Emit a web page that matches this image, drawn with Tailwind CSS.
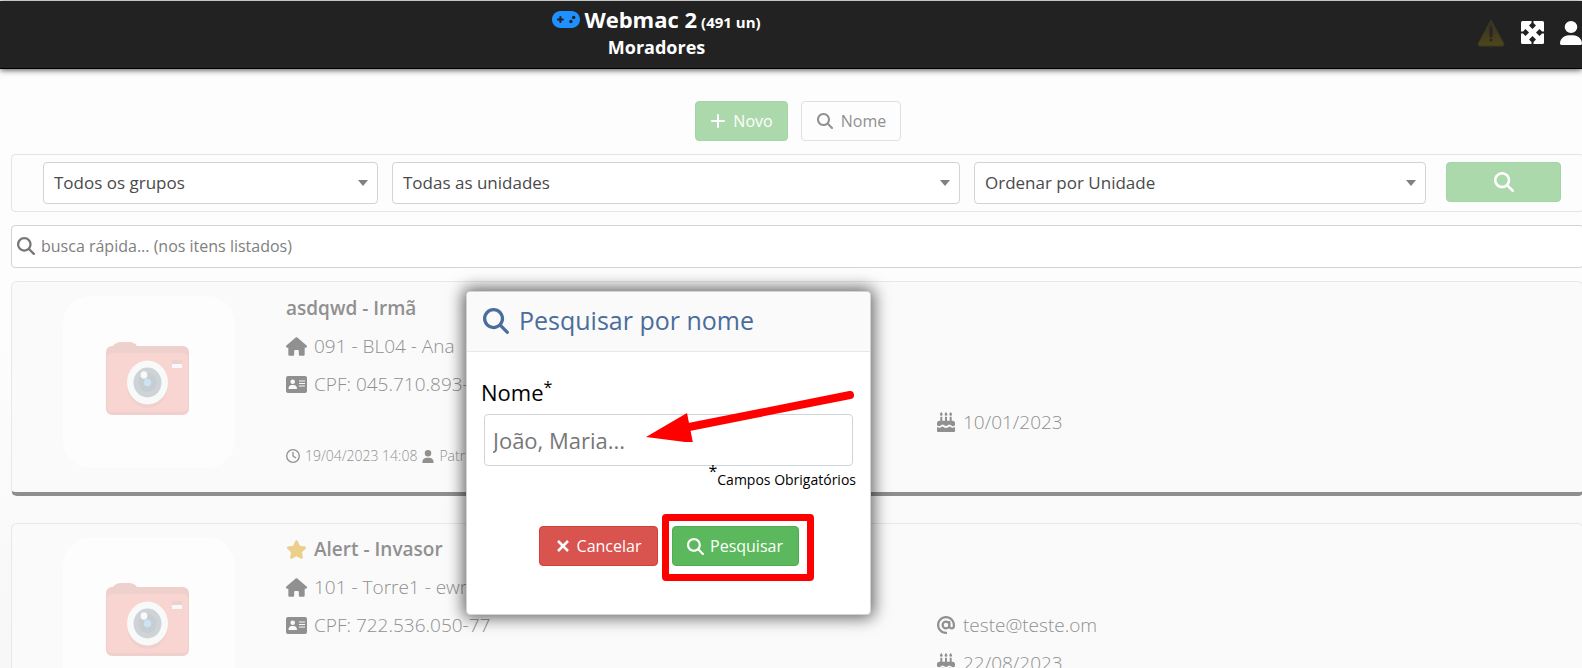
<!DOCTYPE html>
<html lang="pt-BR">
<head>
    <meta charset="UTF-8">
    <meta name="viewport" content="width=device-width, initial-scale=1.0">
    <title>Moradores</title>
    <script src="https://cdn.jsdelivr.net/npm/@tailwindcss/browser@4"></script>
</head>
<body class="h-screen overflow-hidden bg-linear-to-b from-[#fdfdfd] from-50% to-[#f7f7f7] font-['Open_Sans',sans-serif] text-base text-[#909090]">

    <!-- icons -->
    <svg class="hidden">
        <symbol id="i-search" viewBox="0 0 512 512"><path fill="currentColor" d="M416 208c0 45.9-14.9 88.3-40 122.7L502.6 457.4c12.5 12.5 12.5 32.8 0 45.3s-32.8 12.5-45.3 0L330.7 376c-34.4 25.2-76.8 40-122.7 40C93.1 416 0 322.9 0 208S93.1 0 208 0S416 93.1 416 208zM208 352a144 144 0 1 0 0-288 144 144 0 1 0 0 288z"/></symbol>
        <symbol id="i-user" viewBox="0 0 448 512"><path fill="currentColor" d="M224 256A128 128 0 1 0 224 0a128 128 0 1 0 0 256zm-45.7 48C79.8 304 0 383.8 0 482.3C0 498.7 13.3 512 29.7 512H418.3c16.4 0 29.7-13.3 29.7-29.7C448 383.8 368.2 304 269.7 304H178.3z"/></symbol>
        <symbol id="i-home" viewBox="0 0 576 512"><path fill="currentColor" d="M575.8 255.5c0 18-15 32.1-32 32.1h-32l.7 160.2c0 2.7-.2 5.4-.5 8.1V472c0 22.1-17.9 40-40 40H392c-22.1 0-40-17.9-40-40V384c0-17.7-14.3-32-32-32H256c-17.7 0-32 14.3-32 32v88c0 22.1-17.9 40-40 40H104c-22.1 0-40-17.9-40-40V287.6H32c-18 0-32-14-32-32.1c0-9 3-17 10-24L266.4 8c7-7 15-8 22-8s15 2 21 7L564.8 231.5c8 7 12 15 11 24z"/></symbol>
        <symbol id="i-star" viewBox="0 0 576 512"><path fill="currentColor" d="M316.9 18C311.6 7 300.4 0 288.1 0s-23.4 7-28.8 18L195 150.3 51.4 171.5c-12 1.8-22 10.2-25.7 21.7s-.7 24.2 7.9 32.7L137.8 329 113.2 474.7c-2 12 3 24.2 12.9 31.3s23 8 33.8 2.3l128.3-68.5 128.3 68.5c10.8 5.7 23.9 4.9 33.8-2.3s14.9-19.3 12.9-31.3L438.5 329 542.7 225.9c8.6-8.5 11.7-21.2 7.9-32.7s-13.7-19.9-25.7-21.7L381.2 150.3 316.9 18z"/></symbol>
        <symbol id="i-card" viewBox="0 0 21 17">
            <path fill="currentColor" fill-rule="evenodd" d="M2 0h17a2 2 0 0 1 2 2v13a2 2 0 0 1-2 2H2a2 2 0 0 1-2-2V2a2 2 0 0 1 2-2zM6.7 3.5a2.3 2.3 0 1 0 0 4.6a2.3 2.3 0 1 0 0-4.6zM2.5 13h8.5c0-2.6-1.500-4-3.200-4H5.700c-1.700 0-3.200 1.400-3.200 4zM13 4.500v1.100h6V4.500zM13 7v1.100h6V7zM13 9.500v1.100h6V9.500z"/>
        </symbol>
        <symbol id="i-clock" viewBox="0 0 16 16"><circle cx="8" cy="8" r="7.2" fill="none" stroke="currentColor" stroke-width="1.5"/><path d="M8 3.8V8l3 2" fill="none" stroke="currentColor" stroke-width="1.5" stroke-linecap="round"/></symbol>
        <symbol id="i-at" viewBox="0 0 512 512"><path fill="currentColor" d="M256 64C150 64 64 150 64 256s86 192 192 192c17.7 0 32 14.3 32 32s-14.3 32-32 32C114.6 512 0 397.4 0 256S114.6 0 256 0S512 114.6 512 256v32c0 53-43 96-96 96c-29.3 0-55.6-13.2-73.2-33.9C320 371.1 289.5 384 256 384c-70.7 0-128-57.3-128-128s57.3-128 128-128c27.9 0 53.7 8.9 74.7 24.1c5.7-5 13.1-8.1 21.3-8.1c17.7 0 32 14.3 32 32v112c0 17.7 14.3 32 32 32s32-14.3 32-32V256c0-106-86-192-192-192zm64 192a64 64 0 1 0 -128 0 64 64 0 1 0 128 0z"/></symbol>
        <symbol id="i-cake" viewBox="0 0 18 20">
            <path fill="currentColor" d="M4.3 0c1 1.2 1.4 1.7 1.4 2.4a1.4 1.4 0 0 1-2.8 0c0-.7.4-1.2 1.4-2.4zM9 0c1 1.2 1.4 1.7 1.4 2.4a1.4 1.4 0 0 1-2.8 0c0-.7.4-1.2 1.4-2.4zM13.7 0c1 1.2 1.4 1.7 1.4 2.4a1.4 1.4 0 0 1-2.8 0c0-.7.4-1.2 1.4-2.4zM3.3 4.8h2v4h2.7v-4h2v4h2.7v-4h2v4h.8a2.500 2.500 0 0 1 2.500 2.500v2c-1.500 1.200-2.500 1.200-4 0-1.500-1-1.800-1-3.200 0-1.300 1-2.300 1-3.600 0-1.400-1-1.700-1-3.200 0-1.500 1.200-2.500 1.200-4 0v-2a2.500 2.500 0 0 1 2.500-2.500h.8zM0 15c1.500 1 2.800 1 4.300-.1.900-.7 1.200-.7 2.100 0 1.700 1.300 3.500 1.300 5.200 0 .9-.7 1.200-.7 2.100 0 1.500 1.100 2.800 1.100 4.300.1v4a1 1 0 0 1-1 1H1a1 1 0 0 1-1-1z"/>
        </symbol>
        <symbol id="i-camera" viewBox="0 0 83 73">
            <path fill="#eed0cd" d="M7 4C9 1 12 0 15 0h8c3 0 6 1 8 4h46a6 6 0 0 1 6 6v57a6 6 0 0 1-6 6H6a6 6 0 0 1-6-6V10a6 6 0 0 1 6-6z"/>
            <rect x="1" y="11" width="81" height="59" rx="5" fill="#f8d5d1"/>
            <ellipse cx="41.5" cy="44" rx="20.5" ry="22" fill="#eed0cd"/>
            <ellipse cx="41.5" cy="40.5" rx="20.5" ry="22" fill="#f8faf9"/>
            <ellipse cx="41.5" cy="40.5" rx="14" ry="15" fill="#ced3d7"/>
            <ellipse cx="41.5" cy="40.5" rx="9" ry="9.5" fill="#c8cdd2"/>
            <circle cx="41.5" cy="40.5" r="3.7" fill="#cae4f3"/>
            <ellipse cx="38" cy="33" rx="3.4" ry="3.8" fill="#f8faf9"/>
            <path fill="#eed0cd" d="M66 18h10v4H66z"/>
            <path fill="#f8faf9" d="M66 22h10v4H66z"/>
        </symbol>
    </svg>

    <!-- top bar -->
    <header class="relative mt-px flex h-[68px] border-b border-black bg-[#222] text-white shadow-[0_1px_6px_rgba(0,0,0,0.7)]">
        <div class="w-[83%] text-center font-bold">
            <h1 class="flex h-9 items-baseline justify-center gap-1 pt-[3px] text-[22px] leading-[30px]">
                <svg class="h-[17px] w-7 text-[#1e90ff]" viewBox="0 64 640 384"><path fill="currentColor" d="M192 64C86 64 0 150 0 256S86 448 192 448H448c106 0 192-86 192-192s-86-192-192-192H192zM496 168a40 40 0 1 1 0 80 40 40 0 1 1 0-80zM392 304a40 40 0 1 1 80 0 40 40 0 1 1 -80 0zM168 200c0-13.3 10.7-24 24-24s24 10.7 24 24v32h32c13.3 0 24 10.7 24 24s-10.7 24-24 24H216v32c0 13.3-10.7 24-24 24s-24-10.7-24-24V280H136c-13.3 0-24-10.7-24-24s10.7-24 24-24h32V200z"/></svg>
                Webmac 2 <small class="text-[15px]">(491 un)</small>
            </h1>
            <h2 class="text-lg leading-5">Moradores</h2>
        </div>
        <nav class="flex flex-1 items-center justify-end gap-4 pb-1">
            <button aria-label="Alertas">
                <svg class="h-7 w-7" viewBox="0 0 28 28">
                    <defs><linearGradient id="warn" x2="0" y2="1"><stop stop-color="#33302a"/><stop offset="1" stop-color="#4e4719"/></linearGradient></defs>
                    <path fill="url(#warn)" stroke="#40381f" d="M14 1 27 25q0 2-2 2H3q-2 0-2-2z"/>
                    <path stroke="#2f2222" stroke-width="3" stroke-linecap="round" d="M14 9v8M14 21v.1"/>
                </svg>
            </button>
            <button aria-label="Tela cheia">
                <svg class="size-[23px]" viewBox="0 0 23 23">
                    <rect width="23" height="23" rx="1.5" fill="#fff"/>
                    <path fill="#222" d="M10.500 0h2v2l2.500 2.500-3.500 3.500-3.500-3.500 2.500-2.500zM10.500 23h2v-2l2.500-2.500-3.500-3.500-3.500 3.500 2.500 2.500zM0 10.500v2h2l2.500 2.500 3.500-3.500-3.500-3.500-2.500 2.500zM23 10.500v2h-2l-2.500 2.500-3.500-3.500 3.500-3.500 2.500 2.500z"/>
                </svg>
            </button>
            <button aria-label="Usuário"><svg class="h-6 w-[22px]" viewBox="0 0 448 512" preserveAspectRatio="none"><use href="#i-user" width="448" height="512"/></svg></button>
        </nav>
    </header>

    <main class="-mr-0.5 ml-[11px] pt-8">
        <div class="flex justify-center gap-[13px]">
            <button class="flex h-10 w-[93px] items-center justify-center gap-2 rounded border border-[#a3d6a5] bg-[#abd9ac] pl-0.5 text-white">
                <svg class="size-3.5" viewBox="0 0 14 14"><path stroke="currentColor" stroke-width="2" stroke-linecap="round" d="M7 1v12M1 7h12"/></svg>
                Novo
            </button>
            <button class="flex h-10 w-[100px] items-center justify-center gap-2 rounded border border-[#e0e0e0] bg-[#fdfdfd] pl-0.5">
                <svg class="size-4"><use href="#i-search"/></svg>
                Nome
            </button>
        </div>

        <form class="mt-[13px] flex items-start rounded border border-[#e5e5e5] py-[7px] pr-[22px] pl-[31px]">
            <div class="grid flex-1 grid-cols-[335fr_568fr_452fr] gap-3.5 text-[17px] text-[#4a4a4a]">
                <div class="relative">
                    <select aria-label="Grupo" class="h-[42px] w-full appearance-none rounded border border-[#ced4da] bg-white pl-2.5"><option>Todos os grupos</option></select>
                    <svg class="pointer-events-none absolute top-[18px] right-2.5 h-1.5 w-2.5 text-[#808080]" viewBox="0 0 10 6"><path fill="currentColor" d="M0 0h10L5 6z"/></svg>
                </div>
                <div class="relative">
                    <select aria-label="Unidade" class="h-[42px] w-full appearance-none rounded border border-[#ced4da] bg-white pl-2.5"><option>Todas as unidades</option></select>
                    <svg class="pointer-events-none absolute top-[18px] right-2.5 h-1.5 w-2.5 text-[#808080]" viewBox="0 0 10 6"><path fill="currentColor" d="M0 0h10L5 6z"/></svg>
                </div>
                <div class="relative">
                    <select aria-label="Ordenar" class="h-[42px] w-full appearance-none rounded border border-[#ced4da] bg-white pl-2.5"><option>Ordenar por Unidade</option></select>
                    <svg class="pointer-events-none absolute top-[18px] right-2.5 h-1.5 w-2.5 text-[#808080]" viewBox="0 0 10 6"><path fill="currentColor" d="M0 0h10L5 6z"/></svg>
                </div>
            </div>
            <button aria-label="Filtrar" class="ml-5 flex h-10 w-[115px] items-center justify-center rounded border border-[#a3d6a5] bg-[#abd9ac] text-white">
                <svg class="size-5"><use href="#i-search"/></svg>
            </button>
        </form>

        <label class="mt-[13px] flex h-[43px] items-center gap-1.5 rounded border border-[#ced4da] bg-white pb-0.5 pl-[5px] text-[#777]">
            <svg class="size-[18px]"><use href="#i-search"/></svg>
            <input type="text" placeholder="busca rápida... (nos itens listados)" class="flex-1 outline-none placeholder:text-[#808080]">
        </label>

        <!-- residents -->
        <article class="mt-[13px] flex h-[215px] rounded-md border border-b-4 border-[#e8e8e8] border-b-[#8e8e8e] bg-[#fafafa] pt-3.5 pl-[51px] text-[19px] font-light">
            <div class="flex size-[172px] items-center justify-center rounded-[28px] bg-[#fdfdfd] pr-1 pb-2">
                <svg class="h-[73px] w-[83px]"><use href="#i-camera"/></svg>
            </div>
            <div class="ml-[51px] flex-1 leading-[38px]">
                <h3 class="-mt-[7px] text-[19px] leading-[38px] font-semibold">asdqwd - Irmã</h3>
                <p class="flex items-center gap-[7px]"><svg class="h-[19px] w-[21px]"><use href="#i-home"/></svg>091 - BL04 - Ana</p>
                <p class="flex items-center gap-[7px]"><svg class="h-[17px] w-[21px]"><use href="#i-card"/></svg>CPF: 045.710.893-</p>
                <p class="mt-[34px] flex items-center gap-[5px] text-sm leading-[38px]">
                    <svg class="size-3.5"><use href="#i-clock"/></svg>19/04/2023 14:08
                    <svg class="h-[13px] w-3"><use href="#i-user"/></svg>Patrí
                </p>
            </div>
            <div class="w-[646px] pt-[107px] leading-[38px]">
                <p class="flex items-center gap-2"><svg class="h-5 w-[18px]"><use href="#i-cake"/></svg>10/01/2023</p>
            </div>
        </article>

        <article class="mt-[27px] flex h-[215px] rounded-md border border-b-4 border-[#e8e8e8] border-b-[#8e8e8e] bg-[#fafafa] pt-[13px] pl-[51px] text-[19px] font-light">
            <div class="flex size-[172px] items-center justify-center rounded-[28px] bg-[#fdfdfd] pr-1 pb-2">
                <svg class="h-[73px] w-[83px]"><use href="#i-camera"/></svg>
            </div>
            <div class="ml-[51px] flex-1 leading-[38px]">
                <h3 class="-mt-[7px] flex items-center gap-[7px] text-[19px] leading-[38px] font-semibold"><svg class="h-[19px] w-[21px] text-[#ebcf8a]"><use href="#i-star"/></svg>Alert - Invasor</h3>
                <p class="flex items-center gap-[7px]"><svg class="h-[19px] w-[21px]"><use href="#i-home"/></svg>101 - Torre1 - ewr</p>
                <p class="flex items-center gap-[7px]"><svg class="h-[17px] w-[21px]"><use href="#i-card"/></svg>CPF: 722.536.050-77</p>
            </div>
            <div class="w-[646px] pt-[69px] leading-[38px]">
                <p class="flex items-center gap-2"><svg class="size-[18px]"><use href="#i-at"/></svg>teste@teste.om</p>
                <p class="flex items-center gap-2"><svg class="h-5 w-[18px]"><use href="#i-cake"/></svg>22/08/2023</p>
            </div>
        </article>
    </main>

    <!-- search dialog -->
    <form role="dialog" aria-labelledby="dialog-title" class="absolute top-[291px] left-[466px] w-[405px] rounded border border-[#ced4da] bg-white pb-12 text-black shadow-[0_0_16px_3px_rgba(0,0,0,0.6)]">
        <div class="flex h-[60px] items-center gap-2.5 rounded-t border-b border-[#e8e8e8] bg-[#fafafa] pb-0.5 pl-4 text-[#4a6d9c]">
            <svg class="size-[26px]"><use href="#i-search"/></svg>
            <h2 id="dialog-title" class="text-[25px]">Pesquisar por nome</h2>
        </div>
        <div class="px-[17px] pt-6">
            <label for="nome" class="-ml-[3px] block text-[22px] leading-8">Nome<sup class="text-base">*</sup></label>
            <input id="nome" type="text" placeholder="João, Maria..." class="mt-1.5 h-[52px] w-full rounded border border-[#ced4da] px-2 text-[22px] placeholder:text-[#777]">
            <p class="-mr-[3px] text-right text-sm leading-7"><sup class="text-base">*</sup>Campos Obrigatórios</p>
        </div>
        <div class="mt-8 flex justify-center gap-3.5 text-white">
            <button type="button" class="flex h-10 w-[119px] items-center justify-center gap-2 rounded border border-[#d43f3a] bg-[#d9534f] pl-0.5">
                <svg class="size-3" viewBox="0 0 12 12"><path stroke="currentColor" stroke-width="2.5" d="m1 1 10 10M11 1 1 11"/></svg>
                Cancelar
            </button>
            <div class="relative">
                <button type="button" class="flex h-10 w-[127px] items-center justify-center gap-1.5 rounded border border-[#4cae4c] bg-[#5cb85c]">
                    <svg class="size-[17px]"><use href="#i-search"/></svg>
                    Pesquisar
                </button>
                <div class="pointer-events-none absolute -top-3 -right-[15px] -bottom-[15px] -left-2.5 rounded-sm border-[7px] border-[red]"></div>
            </div>
        </div>
        <svg class="pointer-events-none absolute top-[98px] left-[178px] h-[52px] w-[212px]" viewBox="0 0 212 52">
            <path stroke="red" stroke-width="8" stroke-linecap="round" d="M205 5 44 37"/>
            <path fill="red" d="M1 47 42 23l6 30z"/>
        </svg>
    </form>
</body>
</html>
